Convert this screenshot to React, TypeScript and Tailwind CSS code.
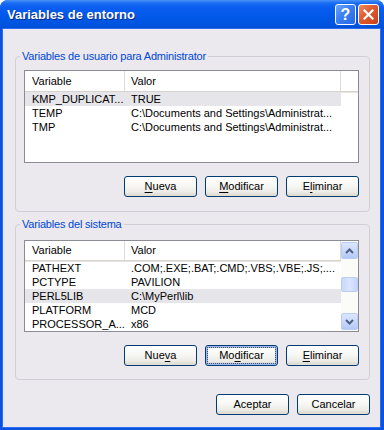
import React from 'react';

type Row = { name: string; value: string; selected?: boolean };

const userVars: Row[] = [
  { name: 'KMP_DUPLICAT...', value: 'TRUE', selected: true },
  { name: 'TEMP', value: 'C:\\Documents and Settings\\Administrat...' },
  { name: 'TMP', value: 'C:\\Documents and Settings\\Administrat...' },
];

const systemVars: Row[] = [
  { name: 'PATHEXT', value: '.COM;.EXE;.BAT;.CMD;.VBS;.VBE;.JS;....' },
  { name: 'PCTYPE', value: 'PAVILION' },
  { name: 'PERL5LIB', value: 'C:\\MyPerl\\lib', selected: true },
  { name: 'PLATFORM', value: 'MCD' },
  { name: 'PROCESSOR_A...', value: 'x86' },
];

// label with one underlined accelerator letter
const Accel: React.FC<{ label: string; at?: number }> = ({ label, at }) => {
  if (at === undefined) return <>{label}</>;
  return (
    <>
      {label.slice(0, at)}
      <span className="underline underline-offset-2">{label[at]}</span>
      {label.slice(at + 1)}
    </>
  );
};

const XpButton: React.FC<{ label: string; at?: number; focused?: boolean }> = ({ label, at, focused }) => (
  <button
    className={
      'h-[21px] w-[73px] rounded-[3px] border border-[#003c74] bg-[linear-gradient(180deg,#ffffff_0%,#f7f7f4_45%,#ecebe6_80%,#d6d0c5_100%)] p-[2px] text-[11px] leading-none text-black ' +
      (focused ? 'shadow-[inset_0_0_0_2px_#9ab9f2]' : 'shadow-[inset_0_-2px_0_#e3ded4]')
    }
  >
    <span
      className={
        'flex h-full w-full items-center justify-center ' + (focused ? 'outline outline-1 outline-dotted outline-[#555]' : '')
      }
    >
      <Accel label={label} at={at} />
    </span>
  </button>
);

const ScrollArrow: React.FC<{ up?: boolean }> = ({ up }) => (
  <div className="flex h-[17px] w-[17px] items-center justify-center rounded-[2px] border border-[#b9cdf6] bg-[linear-gradient(180deg,#dbe6fe_0%,#c6d6fc_60%,#b3c8f6_100%)]">
    <svg width="9" height="6" viewBox="0 0 9 6">
      <path
        d={up ? 'M1 5 L4.5 1.5 L8 5' : 'M1 1 L4.5 4.5 L8 1'}
        fill="none"
        stroke="#4d6185"
        strokeWidth="2"
      />
    </svg>
  </div>
);

const ListView: React.FC<{ rows: Row[]; height: string; scroll?: boolean }> = ({ rows, height, scroll }) => (
  <div className={'flex w-[335px] border border-[#8a8d94] bg-white ' + height}>
    <div className="flex flex-1 flex-col">
      <div className="flex h-[21px] border-b border-[#d6d3ce] bg-white shadow-[0_1px_0_#e8e6e0]">
        <div className="flex w-[100px] items-center border-r border-[#dedcd6] pl-[7px]">Variable</div>
        <div className="flex w-[216px] items-center border-r border-[#dedcd6] pl-[6px]">Valor</div>
      </div>
      {rows.map((r) => (
        <div key={r.name} className={'flex h-[14px] w-[316px] items-center ' + (r.selected ? 'bg-[#e6e5ea]' : '')}>
          <div className="w-[100px] pl-[7px] whitespace-nowrap">{r.name}</div>
          <div className="w-[216px] pl-[6px] whitespace-nowrap">{r.value}</div>
        </div>
      ))}
    </div>
    {scroll && (
      <div className="flex w-[17px] flex-col justify-between bg-[#fbfbf8] py-px">
        <ScrollArrow up />
        <div className="mb-[4px] flex h-[15px] w-[17px] rounded-[2px] border border-[#b9cdf6] bg-[linear-gradient(90deg,#c8d7fc_0%,#dbe5fd_50%,#c6d6fb_100%)]" />
        <ScrollArrow />
      </div>
    )}
  </div>
);

const GroupBox: React.FC<{ title: string; children: React.ReactNode; className?: string }> = ({ title, children, className }) => (
  <fieldset className={'mx-[12px] w-[355px] rounded-[4px] border border-[#d0ced6] px-[8px] ' + (className ?? '')}>
    <legend className="-ml-[4px] px-[2px] leading-[13px] tracking-[-0.2px] text-[#0046d5]">{title}</legend>
    {children}
  </fieldset>
);

export default function App() {
  return (
    <div className="flex h-[430px] w-[384px] flex-col overflow-hidden rounded-t-[8px] bg-[#0a52df] font-['Liberation_Sans',Arial,sans-serif] text-[11px] text-black">
      {/* title bar */}
      <div className="flex h-[29px] shrink-0 items-center bg-[linear-gradient(180deg,#4a93f8_0%,#1c6ef2_10%,#0a5ef0_25%,#0058e8_60%,#0053de_88%,#004ace_100%)] pl-[7px] pr-[5px]">
        <span className="flex-1 text-[13px] font-bold text-white [text-shadow:1px_1px_0_#0a2a8a]">
          Variables de entorno
        </span>
        <div className="flex gap-[2px]">
          <div className="flex h-[21px] w-[21px] items-center justify-center rounded-[3px] border border-white bg-[linear-gradient(135deg,#6ea6fb_0%,#3a7ff2_45%,#2867e4_100%)] text-[16px] font-bold text-white">
            ?
          </div>
          <div className="flex h-[21px] w-[21px] items-center justify-center rounded-[3px] border border-white bg-[linear-gradient(135deg,#f08a64_0%,#e05a2f_45%,#c6411a_100%)]">
            <svg width="11" height="11" viewBox="0 0 11 11">
              <path d="M1.5 1.5 L9.5 9.5 M9.5 1.5 L1.5 9.5" stroke="white" strokeWidth="2.2" strokeLinecap="square" />
            </svg>
          </div>
        </div>
      </div>

      {/* client area */}
      <div className="ml-[3px] mr-[4px] mb-[3px] flex flex-1 flex-col bg-[#ebe9ed] pt-[21px] shadow-[0_0_0_1px_#2a6ff0]">
        <GroupBox title="Variables de usuario para Administrator" className="pt-[7px] pb-[14px]">
          <ListView rows={userVars} height="h-[93px]" />
          <div className="mt-[13px] flex w-[335px] justify-end gap-[8px]">
            <XpButton label="Nueva" at={0} />
            <XpButton label="Modificar" at={0} />
            <XpButton label="Eliminar" at={1} />
          </div>
        </GroupBox>

        <GroupBox title="Variables del sistema" className="mt-[6px] pt-[9px] pb-[13px]">
          <ListView rows={systemVars} height="h-[92px]" scroll />
          <div className="mt-[13px] flex w-[335px] justify-end gap-[8px]">
            <XpButton label="Nueva" at={3} />
            <XpButton label="Modificar" at={2} focused />
            <XpButton label="Eliminar" at={0} />
          </div>
        </GroupBox>

        <div className="mt-[14px] flex justify-end gap-[8px] pr-[10px]">
          <XpButton label="Aceptar" />
          <XpButton label="Cancelar" />
        </div>
      </div>
    </div>
  );
}
